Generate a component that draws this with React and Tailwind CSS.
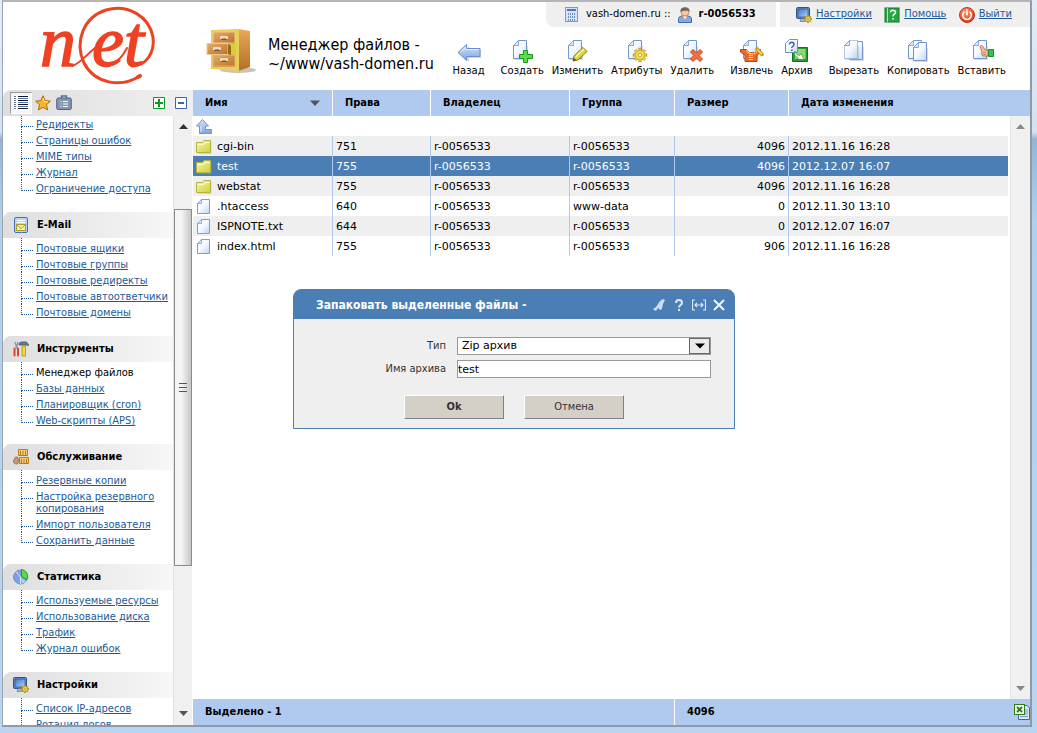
import React from 'react';
import clsx from 'clsx';

const narrow = "font-['DejaVu_Sans_Condensed','DejaVu_Sans',sans-serif]";

/* ---------- shared icon parts ---------- */

const Gradients = () => (
  <svg className="absolute size-0" aria-hidden="true">
    <defs>
      <linearGradient id="page" x1="0" y1="0" x2="1" y2="1">
        <stop offset="0" stopColor="#ffffff" />
        <stop offset="0.5" stopColor="#f4f8ff" />
        <stop offset="1" stopColor="#bcd3f5" />
      </linearGradient>
      <linearGradient id="blue" x1="0" y1="0" x2="0" y2="1">
        <stop offset="0" stopColor="#d3e3fb" />
        <stop offset="1" stopColor="#7fa5e2" />
      </linearGradient>
      <linearGradient id="folder" x1="0" y1="0" x2="1" y2="1">
        <stop offset="0" stopColor="#f8f7a8" />
        <stop offset="1" stopColor="#cfcf3c" />
      </linearGradient>
      <linearGradient id="wood" x1="0" y1="0" x2="0" y2="1">
        <stop offset="0" stopColor="#e9a85a" />
        <stop offset="1" stopColor="#b56f22" />
      </linearGradient>
      <linearGradient id="drawer" x1="0" y1="0" x2="1" y2="1">
        <stop offset="0" stopColor="#e6ad6b" />
        <stop offset="1" stopColor="#b9732b" />
      </linearGradient>
      <linearGradient id="screen" x1="0" y1="0" x2="1" y2="1">
        <stop offset="0" stopColor="#3f7bc4" />
        <stop offset="1" stopColor="#a9d0f6" />
      </linearGradient>
      <radialGradient id="power" cx="0.4" cy="0.3" r="0.8">
        <stop offset="0" stopColor="#ff9a6b" />
        <stop offset="1" stopColor="#d92d0f" />
      </radialGradient>
    </defs>
  </svg>
);

const Icon = ({ size = 24, box = 24, children }) => (
  <svg width={size} height={size} viewBox={`0 0 ${box} ${box}`} className="shrink-0" aria-hidden="true">
    {children}
  </svg>
);

const Page = ({ x = 0, y = 0, dashed }) => (
  <g transform={`translate(${x} ${y})`}>
    <path d="M3 7h14v14H3z" fill="#9aa7bb" opacity="0.4" />
    <path d="M7.500 1.500h8v18h-13v-13z" fill="url(#page)" stroke="#7396cc" strokeDasharray={dashed ? '1 1' : undefined} />
    <path d="M7.500 1.500v5h-5z" fill="#dfeafb" stroke="#7396cc" strokeWidth="0.8" />
  </g>
);

const Gear = ({ cx, cy, r }) => (
  <g>
    {[0, 45, 90, 135].map((a) => (
      <rect
        key={a}
        x={cx - r * 0.22}
        y={cy - r * 1.35}
        width={r * 0.44}
        height={r * 2.7}
        fill="#f5e04c"
        stroke="#b58a12"
        strokeWidth="0.8"
        transform={`rotate(${a} ${cx} ${cy})`}
      />
    ))}
    <circle cx={cx} cy={cy} r={r * 0.9} fill="#f5e04c" stroke="#c9a020" strokeWidth="0.7" />
    <circle cx={cx} cy={cy} r={r * 0.35} fill="#fff" stroke="#b58a12" strokeWidth="0.7" />
  </g>
);

const Monitor = () => (
  <Icon size={16} box={16}>
    <rect x="0.5" y="0.5" width="13" height="11" rx="1" fill="#6a8fc6" stroke="#2f5590" />
    <rect x="2" y="2" width="10" height="8" fill="url(#screen)" stroke="#1e4a8a" strokeWidth="0.6" />
    <path d="M4 14.5h6l-1-3H5z" fill="#9fb3d1" stroke="#5b7095" strokeWidth="0.6" />
    <Gear cx={12} cy={12} r={2.7} />
  </Icon>
);

/* ---------- toolbar icons ---------- */

const toolIcons = {
  back: (
    <Icon>
      <path d="M3 14l9-8v4h12v8H12v4z" fill="#8794ab" opacity="0.4" transform="translate(0 1)" />
      <path d="M1 13.5l8.500-8v4H23v8H9.500v4z" fill="url(#blue)" stroke="#6b8fce" strokeLinejoin="round" />
      <path d="M3.500 13l5-4.500v2H22" fill="none" stroke="#e9f2ff" />
    </Icon>
  ),
  create: (
    <Icon>
      <Page x={1} />
      <path d="M13.500 11.500h4v4h5v4h-5v4h-4v-4h-4v-4h4z" fill="#5fd84c" stroke="#159a1c" strokeLinejoin="round" />
    </Icon>
  ),
  edit: (
    <Icon>
      <Page x={1} />
      <path d="M8 22l1-5 9-8.500 4 4L13 21z" fill="#e3d43c" stroke="#8a7c18" strokeLinejoin="round" />
      <path d="M10.500 18l8.500-8" stroke="#fbf6a8" strokeWidth="1.500" />
      <path d="M8 22l1-3 2 2z" fill="#4d4510" />
    </Icon>
  ),
  attrs: (
    <Icon>
      <Page x={1} />
      <Gear cx={15} cy={16} r={5} />
    </Icon>
  ),
  remove: (
    <Icon>
      <Page x={1} />
      <path d="M10.500 13l2.500-2.500 3.500 3.500 3.500-3.500 2.500 2.500-3.500 3.500 3.500 3.500-2.500 2.500-3.500-3.500-3.500 3.500-2.500-2.500 3.500-3.500z" fill="#f5713f" stroke="#c93a14" strokeLinejoin="round" />
    </Icon>
  ),
  extract: (
    <Icon>
      <Page x={1} />
      <path d="M0.500 10.500h6l3 3h5l3-3h3v3l-3.500 2.500v6.500h-12V16l-4.500-3z" fill="#f0672c" stroke="#bf3e10" strokeLinejoin="round" />
      <path d="M6.500 11.500l3 3h5l3-3" fill="none" stroke="#f7e38c" strokeWidth="1.500" strokeDasharray="1.500 0.700" />
      <path d="M11 14v8" stroke="#f7e38c" strokeWidth="4" strokeDasharray="1 1" />
      <path d="M17 10l5 5.500" stroke="#c8931c" strokeWidth="3.500" strokeLinecap="round" />
      <path d="M17.500 10.500l4 4.500" stroke="#f8dc6a" strokeWidth="1.500" strokeLinecap="round" />
    </Icon>
  ),
  archive: (
    <Icon>
      <path d="M7.500 8.500h15v14h-15z" fill="#2e9b32" stroke="#14701c" />
      <path d="M10 10h10.500v10H10z" fill="#8edb6e" />
      <path d="M4.500 0.500h8v13h-12v-9z" fill="url(#page)" stroke="#6b90cc" />
      <path d="M4.500 5.500c0-3 4.500-3 4.500 0 0 2-2.200 1.500-2.200 3.500M6.800 10.500v1.500" fill="none" stroke="#3568b0" strokeWidth="1.500" />
      <path d="M10 12c0 3 2 4 4.500 4.500l1.500-2 3 6-7-.5 1.200-1.500c-3-1-4.700-3-3.200-6.500z" fill="#fff" stroke="#2a8a30" strokeWidth="0.6" />
    </Icon>
  ),
  cut: (
    <Icon>
      <Page x={5} y={1} />
      <Page x={0} dashed />
    </Icon>
  ),
  copy: (
    <Icon>
      <Page x={0} />
      <Page x={5} y={2} />
    </Icon>
  ),
  paste: (
    <Icon>
      <Page x={1} />
      <path d="M10 7.500c1-2 3-1 3.500 1L15 11h3v6h-5c-2-1-1-3-1-4z" fill="#f6bd94" stroke="#bb7446" strokeWidth="0.9" />
      <path d="M13 13.500h3M13 15.500h3" stroke="#bb7446" strokeWidth="0.700" />
      <path d="M18.500 10.500h5v7h-5z" fill="#35c247" stroke="#1a9130" />
    </Icon>
  ),
};

/* ---------- sidebar icons ---------- */

const menuIcons = {
  mail: (
    <Icon size={16} box={16}>
      <rect x="1.500" y="0.500" width="13" height="15" rx="1.500" fill="#b9d2f6" stroke="#4673b5" />
      <path d="M4 3.500h8M4 5.500h8" stroke="#fff" strokeWidth="1.200" />
      <rect x="3.500" y="7.500" width="9" height="6" fill="#f6f29a" stroke="#a8a034" />
      <path d="M4 8l4 3.500L12 8" fill="none" stroke="#a8a034" />
    </Icon>
  ),
  tools: (
    <Icon size={16} box={16}>
      <path d="M6 2.500L8 1h5.500l2 2.500v1L13 4H6z" fill="#6c7a90" stroke="#3d4859" strokeWidth="0.700" />
      <path d="M9 5h3.500v10H9z" fill="#e8dc3e" stroke="#958b1d" strokeWidth="0.700" />
      <path d="M2 1l1.500 5L5 1" fill="none" stroke="#8593a8" strokeWidth="1.300" />
      <path d="M1.500 7.500v7M5 7.500v7" stroke="#df432c" strokeWidth="2" strokeLinecap="round" />
      <path d="M1.500 7.500L5 6" stroke="#8593a8" />
    </Icon>
  ),
  service: (
    <Icon size={16} box={16}>
      <path d="M5.500 0.500h9v6h-9zM6.500 8.500h9v6h-9z" fill="#f7cb74" stroke="#b87a1e" />
      <path d="M7.500 2v4M10 2v4M12.500 2v4M8.500 10v4M11 10v4M13.500 10v4" stroke="#b87a1e" />
      <path d="M2.500 8h2l1 2.500c1 2 0 4.500-2 4.500S-0.500 13 1 10.500z" fill="#c29a72" stroke="#8b6846" strokeWidth="0.800" />
    </Icon>
  ),
  stats: (
    <Icon size={16} box={16}>
      <circle cx="7.500" cy="8" r="7" fill="#7aa2e2" stroke="#6f93cc" />
      <path d="M7.500 8L3 2.500M7.500 8v7" stroke="#dbe8fc" />
      <path d="M8.500 7.500V0.500a7 7 0 015.500 10z" fill="#63d84e" stroke="#1e9a28" strokeWidth="0.900" />
      <path d="M8 9l5 3.500-4 2z" fill="#b9d0f5" />
    </Icon>
  ),
  settings: <Monitor />,
};

const ListIcon = () => (
  <Icon size={16} box={16}>
    <path d="M0.500 0.500h15v15h-15z" fill="#fff" />
    <path d="M5 1.500h10M5 5.500h10M5 9.500h10M5 13.500h10" stroke="#111827" />
    <path d="M5 3.500h10M5 7.500h10M5 11.500h10" stroke="#4f74a8" />
    <path d="M1 1.500h2M1 3.500h2M1 5.500h2M1 7.500h2M1 9.500h2M1 11.500h2M1 13.500h2" stroke="#5f6f88" />
  </Icon>
);

const StarIcon = () => (
  <Icon size={16} box={16}>
    <path d="M8 0.800l2.200 4.800 5.200.6-3.900 3.500 1.100 5.200L8 12.300l-4.600 2.600 1.100-5.200L0.600 6.200l5.200-.6z" fill="#f7b52b" stroke="#a86a0c" strokeLinejoin="round" />
    <path d="M8 3l1.300 3.500 3.700.4" fill="none" stroke="#ffe9a0" />
  </Icon>
);

const BoardIcon = () => (
  <Icon size={16} box={16}>
    <path d="M5.500 3V1h5v2" fill="none" stroke="#5c6f89" strokeWidth="1.500" />
    <rect x="0.700" y="3" width="14.600" height="11.500" rx="1.500" fill="#8396b0" stroke="#53657e" />
    <path d="M4.500 6.500h1M4.500 9h1M4.500 11.500h1M7 6.500h5M7 9h5M7 11.500h5" stroke="#fff" />
  </Icon>
);

const FolderIcon = () => (
  <Icon size={16} box={16}>
    <path d="M1.500 14V3.500h5l1-1.500h7v12z" fill="#b6b64a" opacity="0.400" transform="translate(1 1)" />
    <path d="M0.500 13.500v-10h6l1.500-2h6.500v12z" fill="url(#folder)" stroke="#b4b43e" strokeLinejoin="round" />
    <path d="M1.500 5.500h6l1.500-2h5" fill="none" stroke="#fdfdd0" />
  </Icon>
);

const FileIcon = () => (
  <Icon size={16} box={16}>
    <path d="M5.500 0.500h8v14h-12v-10z" fill="url(#page)" stroke="#7c9fd6" />
    <path d="M5.500 0.500v4h-4z" fill="#e3edfc" stroke="#7c9fd6" strokeWidth="0.800" />
  </Icon>
);

const UpIcon = () => (
  <Icon size={16} box={16}>
    <path d="M6.500 0.500l6 6.500h-3v3.500h6v4h-12V7H0.500z" fill="url(#blue)" stroke="#7094d2" strokeLinejoin="round" />
    <path d="M5 7v6" stroke="#eaf2ff" />
  </Icon>
);

const ServerIcon = () => (
  <Icon size={16} box={16}>
    <rect x="1.500" y="0.500" width="12" height="14" fill="#d5e3f8" stroke="#7b9bcc" />
    <path d="M3 3h9" stroke="#4f78b6" strokeWidth="2" />
    <path d="M4.500 6v8M6.500 6v8M8.500 6v8M10.500 6v8" stroke="#6f94cb" strokeDasharray="2 1" />
  </Icon>
);

const UserIcon = () => (
  <Icon size={16} box={16}>
    <path d="M1.500 15.500v-4c0-1.500 2-2.500 4-2.500h5c2 0 4 1 4 2.500v4z" fill="#82aae6" stroke="#3f6cb0" />
    <path d="M5.500 9h5L8 13z" fill="#fff" stroke="#d98b4e" strokeWidth="0.700" />
    <circle cx="8" cy="5" r="4" fill="#f8c99a" stroke="#c27f45" strokeWidth="0.800" />
    <path d="M3.500 5C3 1 6 .300 8 .300S13 1 12.500 5C11 3 6 4 3.500 5z" fill="#6f665f" />
  </Icon>
);

const HelpIcon = () => (
  <Icon size={16} box={16}>
    <rect x="1" y="1" width="14" height="14" fill="#29a347" stroke="#14752c" />
    <path d="M3.500 1v14" stroke="#a9e5b8" />
    <path d="M6.500 5.500c0-3 5-3 5 0 0 2-2.500 1.500-2.500 4M9 11v1.800" fill="none" stroke="#e6ffe9" strokeWidth="1.500" />
  </Icon>
);

const PowerIcon = () => (
  <Icon size={16} box={16}>
    <circle cx="8" cy="8" r="7.500" fill="url(#power)" stroke="#b9290d" strokeWidth="0.900" />
    <path d="M5 5a4.300 4.300 0 106 0M8 2.800v5" fill="none" stroke="#fff" strokeWidth="1.500" strokeLinecap="round" />
  </Icon>
);

const ExcelIcon = () => (
  <Icon size={16} box={16}>
    <path d="M7 1.500h6l2.500 2.500v11.500H4.500V11" fill="#dbe7fb" stroke="#3f66a8" />
    <path d="M11 6h3M11 8h3M11 10h3M6 12.500h8" stroke="#7396cf" />
    <rect x="0.500" y="0.500" width="10" height="10" fill="#eef8e6" stroke="#2f7a1e" />
    <path d="M3 3l5 5M8 3L3 8" stroke="#2f7a1e" strokeWidth="1.800" />
  </Icon>
);

const Logo = () => (
  <svg width="124" height="88" viewBox="0 -4 124 88" role="img" aria-label="net">
    <g fill="#ef4223" stroke="#ef4223" strokeWidth="1.500" fontFamily="Liberation Serif" fontStyle="italic">
      <text x="3" y="60" fontSize="72">n</text>
      <text x="55" y="60" fontSize="72">et</text>
    </g>
    <g fill="none" stroke="#ef4223" strokeLinecap="round">
      <path d="M103 70C84 82 58 78 47 57C37 35 47 11 69 4C91-2 112 10 116 31C118 47 109 60 95 60" strokeWidth="3" />
      <path d="M35 60C43 58 50 48 58 42" strokeWidth="2" />
      <path d="M72 59C80 57 86 50 90 42" strokeWidth="2" />
      <path d="M103 70l-2 1" strokeWidth="4" />
    </g>
  </svg>
);

const Cabinet = () => (
  <svg width="50" height="48" viewBox="0 0 50 48" aria-hidden="true">
    <ellipse cx="32" cy="43" rx="18" ry="3" fill="#8b7a60" opacity="0.450" />
    <path d="M32 2l12 2v36l-12 4z" fill="url(#wood)" />
    <path d="M5 3L33 2v42L5 42z" fill="#e8cf55" />
    <path d="M7 5h22v35H7z" fill="#c9892f" />
    <rect x="7" y="5" width="22" height="11" fill="url(#drawer)" stroke="#f2c88f" />
    <rect x="24" y="17" width="6" height="11" fill="#d5cf38" />
    <rect x="7" y="28" width="22" height="11" fill="url(#drawer)" stroke="#e6b272" />
    <rect x="1" y="16.500" width="21" height="11" fill="url(#drawer)" stroke="#f2c88f" />
    <path d="M22 17l3 2v9l-3-1z" fill="#a4631c" />
    <path d="M15 12v-2h6v2M8 23v-2h6v2M15 34v-2h6v2" fill="none" stroke="#f3f0ec" strokeWidth="1.500" />
    <path d="M15 12.500h6M8 23.500h6M15 34.500h6" stroke="#7d5a3a" />
  </svg>
);

/* ---------- data ---------- */

const tools = [
  [{ id: 'back', label: 'Назад' }],
  [
    { id: 'create', label: 'Создать' },
    { id: 'edit', label: 'Изменить' },
    { id: 'attrs', label: 'Атрибуты' },
    { id: 'remove', label: 'Удалить' },
  ],
  [
    { id: 'extract', label: 'Извлечь' },
    { id: 'archive', label: 'Архив' },
  ],
  [
    { id: 'cut', label: 'Вырезать' },
    { id: 'copy', label: 'Копировать' },
    { id: 'paste', label: 'Вставить' },
  ],
];

const menu = [
  { items: ['Редиректы', 'Страницы ошибок', 'MIME типы', 'Журнал', 'Ограничение доступа'] },
  {
    title: 'E-Mail',
    icon: 'mail',
    items: ['Почтовые ящики', 'Почтовые группы', 'Почтовые редиректы', 'Почтовые автоответчики', 'Почтовые домены'],
  },
  {
    title: 'Инструменты',
    icon: 'tools',
    items: ['Менеджер файлов', 'Базы данных', 'Планировщик (cron)', 'Web-скрипты (APS)'],
  },
  {
    title: 'Обслуживание',
    icon: 'service',
    items: ['Резервные копии', 'Настройка резервного копирования', 'Импорт пользователя', 'Сохранить данные'],
  },
  {
    title: 'Статистика',
    icon: 'stats',
    items: ['Используемые ресурсы', 'Использование диска', 'Трафик', 'Журнал ошибок'],
  },
  { title: 'Настройки', icon: 'settings', items: ['Список IP-адресов', 'Ротация логов'] },
];

const current = 'Менеджер файлов';

const files = [
  { name: 'cgi-bin', dir: true, mode: '751', owner: 'r-0056533', group: 'r-0056533', size: 4096, date: '2012.11.16 16:28' },
  { name: 'test', dir: true, mode: '755', owner: 'r-0056533', group: 'r-0056533', size: 4096, date: '2012.12.07 16:07', selected: true },
  { name: 'webstat', dir: true, mode: '755', owner: 'r-0056533', group: 'r-0056533', size: 4096, date: '2012.11.16 16:28' },
  { name: '.htaccess', mode: '640', owner: 'r-0056533', group: 'www-data', size: 0, date: '2012.11.30 13:10' },
  { name: 'ISPNOTE.txt', mode: '644', owner: 'r-0056533', group: 'r-0056533', size: 0, date: '2012.12.07 16:07' },
  { name: 'index.html', mode: '755', owner: 'r-0056533', group: 'r-0056533', size: 906, date: '2012.11.16 16:28' },
];

/* ---------- components ---------- */

const linkClass = 'text-[#1c5a99] underline';

const Header = () => (
  <header className="flex h-[88px] shrink-0 bg-white">
    <div className="w-[203px] shrink-0 pl-[34px]">
      <Logo />
    </div>
    <div className="flex shrink-0 gap-3 pt-[25px]">
      <Cabinet />
      <h1 className={clsx(narrow, 'pt-2 text-base leading-[19px] text-black')}>
        Менеджер файлов -<br />~/www/vash-domen.ru
      </h1>
    </div>
    <div className="flex min-w-0 flex-1 flex-col items-end">
      <div className={clsx(narrow, 'flex gap-1 text-[11px]')}>
        <div className="flex h-[25px] w-[230px] items-center rounded-bl-lg bg-[#efefef] pl-[18px]">
          <ServerIcon />
          <span className="ml-1.5">vash-domen.ru ::</span>
          <span className="ml-1.5 flex items-center gap-1.5">
            <UserIcon />
            <b>r-0056533</b>
          </span>
        </div>
        <nav className="flex h-[25px] w-[250px] items-center justify-between bg-[#efefef] pr-[18px] pl-4">
          <a href="#settings" className="flex items-center gap-1"><Monitor /><span className={linkClass}>Настройки</span></a>
          <a href="#help" className="flex items-center gap-1"><HelpIcon /><span className={linkClass}>Помощь</span></a>
          <a href="#exit" className="flex items-center gap-1"><PowerIcon /><span className={linkClass}>Выйти</span></a>
        </nav>
      </div>
      <div className="mt-3 flex gap-2 pr-5">
        {tools.map((group, i) => (
          <div key={i} className="flex">
            {group.map((tool) => (
              <button key={tool.id} type="button" className="flex flex-col items-center gap-0.5 px-1 text-[10px] leading-3 text-black">
                {toolIcons[tool.id]}
                {tool.label}
              </button>
            ))}
          </div>
        ))}
      </div>
    </div>
  </header>
);

const MenuItem = ({ label, first, last }) => (
  <li className="flex">
    <div className="ml-[18px] flex w-[15px] shrink-0 flex-col pr-[3px]">
      <div className={clsx('border-b border-l border-dotted border-[#1c5a99]', first ? 'h-[13px]' : 'h-[11px]')} />
      {!last && <div className="flex-1 border-l border-dotted border-[#1c5a99]" />}
    </div>
    <div className={clsx('pb-px leading-3', first ? 'pt-[5px]' : 'pt-[3px]')}>
      {label === current ? <span>{label}</span> : <a href="#menu" className={linkClass}>{label}</a>}
    </div>
  </li>
);

const Sidebar = () => (
  <aside className="flex w-[190px] shrink-0 flex-col">
    <div className="flex h-[26px] shrink-0 items-center rounded-tl-lg bg-gradient-to-r from-[#dedede] to-[#f0f0f0] pr-1.5 pl-[7px]">
      <button type="button" aria-label="Меню" className="flex h-[22px] w-[22px] items-center justify-center border border-t-[#9a9a9a] border-r-white border-b-white border-l-[#9a9a9a] bg-[#f4f4f4]"><ListIcon /></button>
      <button type="button" aria-label="Избранное" className="ml-[3px]"><StarIcon /></button>
      <button type="button" aria-label="Буфер" className="ml-[5px]"><BoardIcon /></button>
      <button type="button" aria-label="Развернуть" className="ml-auto">
        <Icon size={12} box={12}><path d="M0.500 0.500h11v11H0.500z" fill="#fff" stroke="#0a9a1c" /><path d="M6 2v8M2 6h8" stroke="#0a9a1c" strokeWidth="2" /></Icon>
      </button>
      <button type="button" aria-label="Свернуть" className="ml-2.5">
        <Icon size={12} box={12}><path d="M0.500 0.500h11v11H0.500z" fill="#fff" stroke="#3c68a8" /><path d="M3 6h6" stroke="#3c68a8" strokeWidth="2" /></Icon>
      </button>
    </div>
    <div className="flex min-h-0 flex-1">
      <nav className={clsx(narrow, 'w-[170px] overflow-hidden text-[11px]')}>
        {menu.map((section, i) => (
          <section key={i} className="pb-4">
            {section.title && (
              <h2 className="flex h-[26px] items-center gap-2 rounded-tl-lg bg-gradient-to-r from-[#dedede] to-[#f7f7f7] pl-2.5 font-bold">
                {menuIcons[section.icon]}
                {section.title}
              </h2>
            )}
            <ul>
              {section.items.map((label, n) => (
                <MenuItem key={label} label={label} first={n === 0 && !!section.title} last={n === section.items.length - 1} />
              ))}
            </ul>
          </section>
        ))}
      </nav>
      <div className="flex w-[19px] flex-col items-center border-l border-[#e2e2e2] bg-[#f0f0f0]">
        <div className="flex h-5 items-center"><Icon size={9} box={9}><path d="M4.500 2L9 7H0z" fill="#333" /></Icon></div>
        <div className="flex-[74]" />
        <div className="flex w-full flex-[357] flex-col items-center justify-center gap-[3px] border border-[#8b8b8b] bg-gradient-to-r from-[#f5f5f5] from-40% to-[#c4c5c8]">
          <div className="h-px w-2 bg-[#555]" />
          <div className="h-px w-2 bg-[#555]" />
          <div className="h-px w-2 bg-[#555]" />
        </div>
        <div className="flex-[137]" />
        <div className="flex h-[23px] items-center"><Icon size={9} box={9}><path d="M4.500 7L9 2H0z" fill="#555" /></Icon></div>
      </div>
    </div>
  </aside>
);

const Columns = ({ extra }) => (
  <colgroup>
    <col className="w-[140px]" />
    <col className="w-[98px]" />
    <col className="w-[139px]" />
    <col className="w-[105px]" />
    <col className="w-[114px]" />
    <col />
    {extra && <col className="w-[22px]" />}
  </colgroup>
);

const FileTable = () => (
  <table className="w-full table-fixed border-separate border-spacing-0">
    <Columns />
    <tbody>
      <tr className="h-5">
        <td colSpan={6} className="p-0 pt-0.5 pl-[3px]"><a href="#up" aria-label="Вверх" className="block"><UpIcon /></a></td>
      </tr>
      {files.map((f, i) => (
        <tr
          key={f.name}
          className={clsx(
            'h-5 leading-4 [&>td]:p-0 [&>td]:pt-0.5 [&>td]:pl-[3px] [&>td:not(:last-child)]:border-r [&>td:not(:last-child)]:border-[#b0c9ee]',
            f.selected ? 'bg-[#4a7eb5] text-white' : i % 2 === 0 && 'bg-[#efefef]',
          )}
        >
          <td>
            <div className="flex items-center gap-[5px]">
              {f.dir ? <FolderIcon /> : <FileIcon />}
              {f.name}
            </div>
          </td>
          <td>{f.mode}</td>
          <td>{f.owner}</td>
          <td>{f.group}</td>
          <td className="pr-[3px]! text-right">{f.size}</td>
          <td>{f.date}</td>
        </tr>
      ))}
    </tbody>
  </table>
);

const dialogTools = [
  { name: 'Закрепить', art: <path d="M1 11l3-2 4-6 3-2 2 1-2 4-1 5-2 1-2-2-2 3-2-1z" fill="#c9dcf0" /> },
  { name: 'Справка', art: <path d="M4 5c0-4 6-4 6 0 0 2-3 2-3 4.500M7 11v2" fill="none" stroke="#dbe8f7" strokeWidth="2" /> },
  { name: 'Ширина', art: <path d="M3 2H0.500v10H3M11 2h2.500v10H11M3 7h8M5 5L3 7l2 2M9 5l2 2-2 2" fill="none" stroke="#dbe8f7" strokeWidth="1.200" /> },
  { name: 'Закрыть', art: <path d="M2 2l10 10M12 2L2 12" fill="none" stroke="#eef5fc" strokeWidth="2" /> },
];

const buttonClass =
  'h-6 w-[100px] border border-t-white border-r-[#808080] border-b-[#808080] border-l-white bg-[#d4d0c8] text-[#333]';

const ArchiveDialog = () => (
  <div role="dialog" aria-labelledby="dialog-title" className={clsx(narrow, 'absolute top-[173px] left-[100px] w-[442px] rounded-t-lg border border-[#4a7eb5] bg-[#efefef] text-[11px]')}>
    <div className="flex h-[29px] items-center rounded-t-md bg-[#4a7eb5] pr-2 pl-[22px]">
      <h2 id="dialog-title" className="text-xs font-bold text-white">Запаковать выделенные файлы -</h2>
      <div className="ml-auto flex gap-1.5">
        {dialogTools.map((t) => (
          <button key={t.name} type="button" aria-label={t.name}><Icon size={14} box={14}>{t.art}</Icon></button>
        ))}
      </div>
    </div>
    <form className="pt-[18px] pb-[9px]">
      <div className="grid grid-cols-[152px_254px] items-center gap-x-[11px] gap-y-[5px]">
        <label htmlFor="type" className="text-right text-[#333]">Тип</label>
        <div className="relative h-[18px]">
          <select id="type" className="block h-[18px] w-full appearance-none border border-[#999] bg-white pl-1 font-['DejaVu_Sans'] text-[11px] leading-4">
            <option>Zip архив</option>
          </select>
          <span className="pointer-events-none absolute inset-y-px right-px flex w-[21px] items-center justify-center border border-[#666] bg-[#ebebeb]">
            <Icon size={10} box={10}><path d="M0 2.500h10L5 7.500z" fill="#000" /></Icon>
          </span>
        </div>
        <label htmlFor="name" className="text-right text-[#333]">Имя архива</label>
        <input id="name" type="text" defaultValue="test" className="h-[18px] w-full border border-[#999] bg-white font-['DejaVu_Sans'] text-[11px]" />
      </div>
      <div className="mt-[17px] flex gap-5 pl-[110px]">
        <button type="button" className={clsx(buttonClass, 'font-bold')}>Ok</button>
        <button type="button" className={buttonClass}>Отмена</button>
      </div>
    </form>
  </div>
);

const FileManager = () => (
  <main className="flex min-w-0 flex-1 flex-col">
    <table className={clsx(narrow, 'w-full shrink-0 table-fixed border-separate border-spacing-0 bg-[#b0c9ee] text-left text-[11px]')}>
      <Columns extra />
      <thead>
        <tr className="h-[26px] [&>th]:py-0 [&>th]:pl-3 [&>th:nth-child(-n+5)]:border-r [&>th]:border-white">
          <th>
            <div className="flex items-center justify-between pr-3">
              Имя
              <Icon size={10} box={10}><path d="M0 2.500h10L5 8z" fill="#555" /></Icon>
            </div>
          </th>
          <th>Права</th>
          <th>Владелец</th>
          <th>Группа</th>
          <th>Размер</th>
          <th colSpan={2}>Дата изменения</th>
        </tr>
      </thead>
    </table>
    <div className="relative flex min-h-0 flex-1">
      <div className="min-w-0 flex-1">
        <FileTable />
      </div>
      <div className="ml-0.5 flex w-5 flex-col items-center justify-between border-l border-[#e6e6e6] bg-[#f0f0f0] py-1.5">
        <Icon size={9} box={9}><path d="M4.500 2L9 7H0z" fill="#888" /></Icon>
        <Icon size={9} box={9}><path d="M4.500 7L9 2H0z" fill="#888" /></Icon>
      </div>
      <ArchiveDialog />
    </div>
    <footer className={clsx(narrow, 'flex h-[26px] shrink-0 items-center bg-[#b0c9ee] font-bold')}>
      <div className="flex h-full w-[482px] items-center border-r border-white pl-3">Выделено - 1</div>
      <div className="flex-1 pl-3">4096</div>
      <button type="button" aria-label="Экспорт"><ExcelIcon /></button>
    </footer>
  </main>
);

export default function App() {
  return (
    <div className="h-screen bg-[linear-gradient(#e3ecf6,#d3e1f0_18%,#95b5d6_19%,#b3cfea_30%,#b9d5ef)] pr-[5px] pb-1.5 pl-0.5 font-['DejaVu_Sans',sans-serif] text-[11px] text-black">
      <Gradients />
      <div className="flex h-full flex-col border-t-2 border-r-2 border-b-2 border-l border-t-[#b5b5b5] border-r-[#8f9aa6] border-b-[#8f9aa6] border-l-[#9aa5b1] bg-white">
        <Header />
        <div className="flex min-h-0 flex-1">
          <Sidebar />
          <FileManager />
        </div>
      </div>
    </div>
  );
}
